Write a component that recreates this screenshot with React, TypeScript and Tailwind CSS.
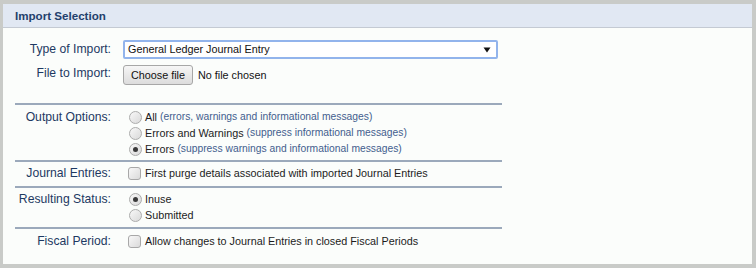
import React from "react";

const Radio = ({ checked }: { checked?: boolean }) => (
  <span className="relative inline-block w-[13px] h-[13px] shrink-0 rounded-full border border-[#acacac] bg-[linear-gradient(135deg,#f8f8f8,#d9d9d9)]">
    {checked && (
      <span className="absolute left-[3px] top-[3px] w-[5px] h-[5px] rounded-full bg-[#3a3a3a]" />
    )}
  </span>
);

const Checkbox = () => (
  <span className="inline-block w-[13px] h-[13px] shrink-0 rounded-[3px] border border-[#a8a8a8] bg-[linear-gradient(135deg,#f8f8f8,#dadada)]" />
);

const Label = ({ children }: { children: React.ReactNode }) => (
  <div className="text-right text-[12.2px] leading-[16px] text-[#1d3962] whitespace-nowrap">
    {children}
  </div>
);

const Sep = () => <div className="h-[2px] bg-[#9ba9bb]" />;

const RadioRow = ({
  checked,
  main,
  note,
}: {
  checked?: boolean;
  main: string;
  note?: string;
}) => (
  <div className="h-[16px] flex items-center pl-[6px] whitespace-nowrap">
    <Radio checked={checked} />
    <span className="ml-[3px] text-[10.8px] text-[#1c1c1c]">{main}</span>
    {note && (
      <span className="ml-[3px] text-[10.3px] text-[#435d8e]">{note}</span>
    )}
  </div>
);

const CheckRow = ({ text }: { text: string }) => (
  <div className="h-[16px] flex items-center pl-[5px] whitespace-nowrap">
    <Checkbox />
    <span className="ml-[4px] text-[10.8px] text-[#1c1c1c]">{text}</span>
  </div>
);

export default function App() {
  return (
    <div className="w-[756px] h-[268px] bg-[#c9cbc8] pt-[4px] pl-[3px] pr-[4px] pb-[4px] font-['Liberation_Sans',Arial,sans-serif]">
      <div className="h-full bg-[#fbfdfb] flex flex-col">
        <div className="h-[24px] shrink-0 bg-[#e1e8f3] border-b border-[#c4cad3] pl-[12px] flex items-center text-[11.6px] font-bold text-[#23406c]">
          Import Selection
        </div>
        <div className="pl-[12px] w-[499px]">
          <div className="grid grid-cols-[96px_1fr] gap-x-3 pt-[12px] h-[75px] content-start">
            <div className="text-right text-[12.2px] leading-[19px] text-[#1d3962] whitespace-nowrap">
              Type of Import:
            </div>
            <div>
              <div className="w-[375px] h-[19px] border-2 border-[#92b4ec] rounded-[2px] bg-white flex items-center justify-between pl-[3px] pr-[5px]">
                <span className="text-[10.8px] text-[#111]">General Ledger Journal Entry</span>
                <svg width="8" height="6" viewBox="0 0 8 6">
                  <path d="M0.5 0.5 H7.5 L4 5.5 Z" fill="#111" />
                </svg>
              </div>
            </div>
            <div className="mt-[6px]">
              <Label>File to Import:</Label>
            </div>
            <div className="mt-[6px] flex items-center">
              <button className="w-[70px] h-[20px] border border-[#a7a7a7] rounded-[3px] bg-[linear-gradient(#f6f6f6,#dcdcdc)] text-[10.8px] text-[#111]">
                Choose file
              </button>
              <span className="ml-[5px] text-[10.8px] text-[#111]">No file chosen</span>
            </div>
          </div>
          <Sep />
          <div className="grid grid-cols-[96px_1fr] gap-x-3 pt-[4px] pb-[3px]">
            <Label>Output Options:</Label>
            <div>
              <RadioRow main="All" note="(errors, warnings and informational messages)" />
              <RadioRow main="Errors and Warnings" note="(suppress informational messages)" />
              <RadioRow checked main="Errors" note="(suppress warnings and informational messages)" />
            </div>
          </div>
          <Sep />
          <div className="grid grid-cols-[96px_1fr] gap-x-3 pt-[3px] pb-[5px]">
            <Label>Journal Entries:</Label>
            <CheckRow text="First purge details associated with imported Journal Entries" />
          </div>
          <Sep />
          <div className="grid grid-cols-[96px_1fr] gap-x-3 pt-[3px] pb-[4px]">
            <Label>Resulting Status:</Label>
            <div>
              <RadioRow checked main="Inuse" />
              <RadioRow main="Submitted" />
            </div>
          </div>
          <Sep />
          <div className="grid grid-cols-[96px_1fr] gap-x-3 pt-[4px]">
            <Label>Fiscal Period:</Label>
            <CheckRow text="Allow changes to Journal Entries in closed Fiscal Periods" />
          </div>
        </div>
      </div>
    </div>
  );
}
